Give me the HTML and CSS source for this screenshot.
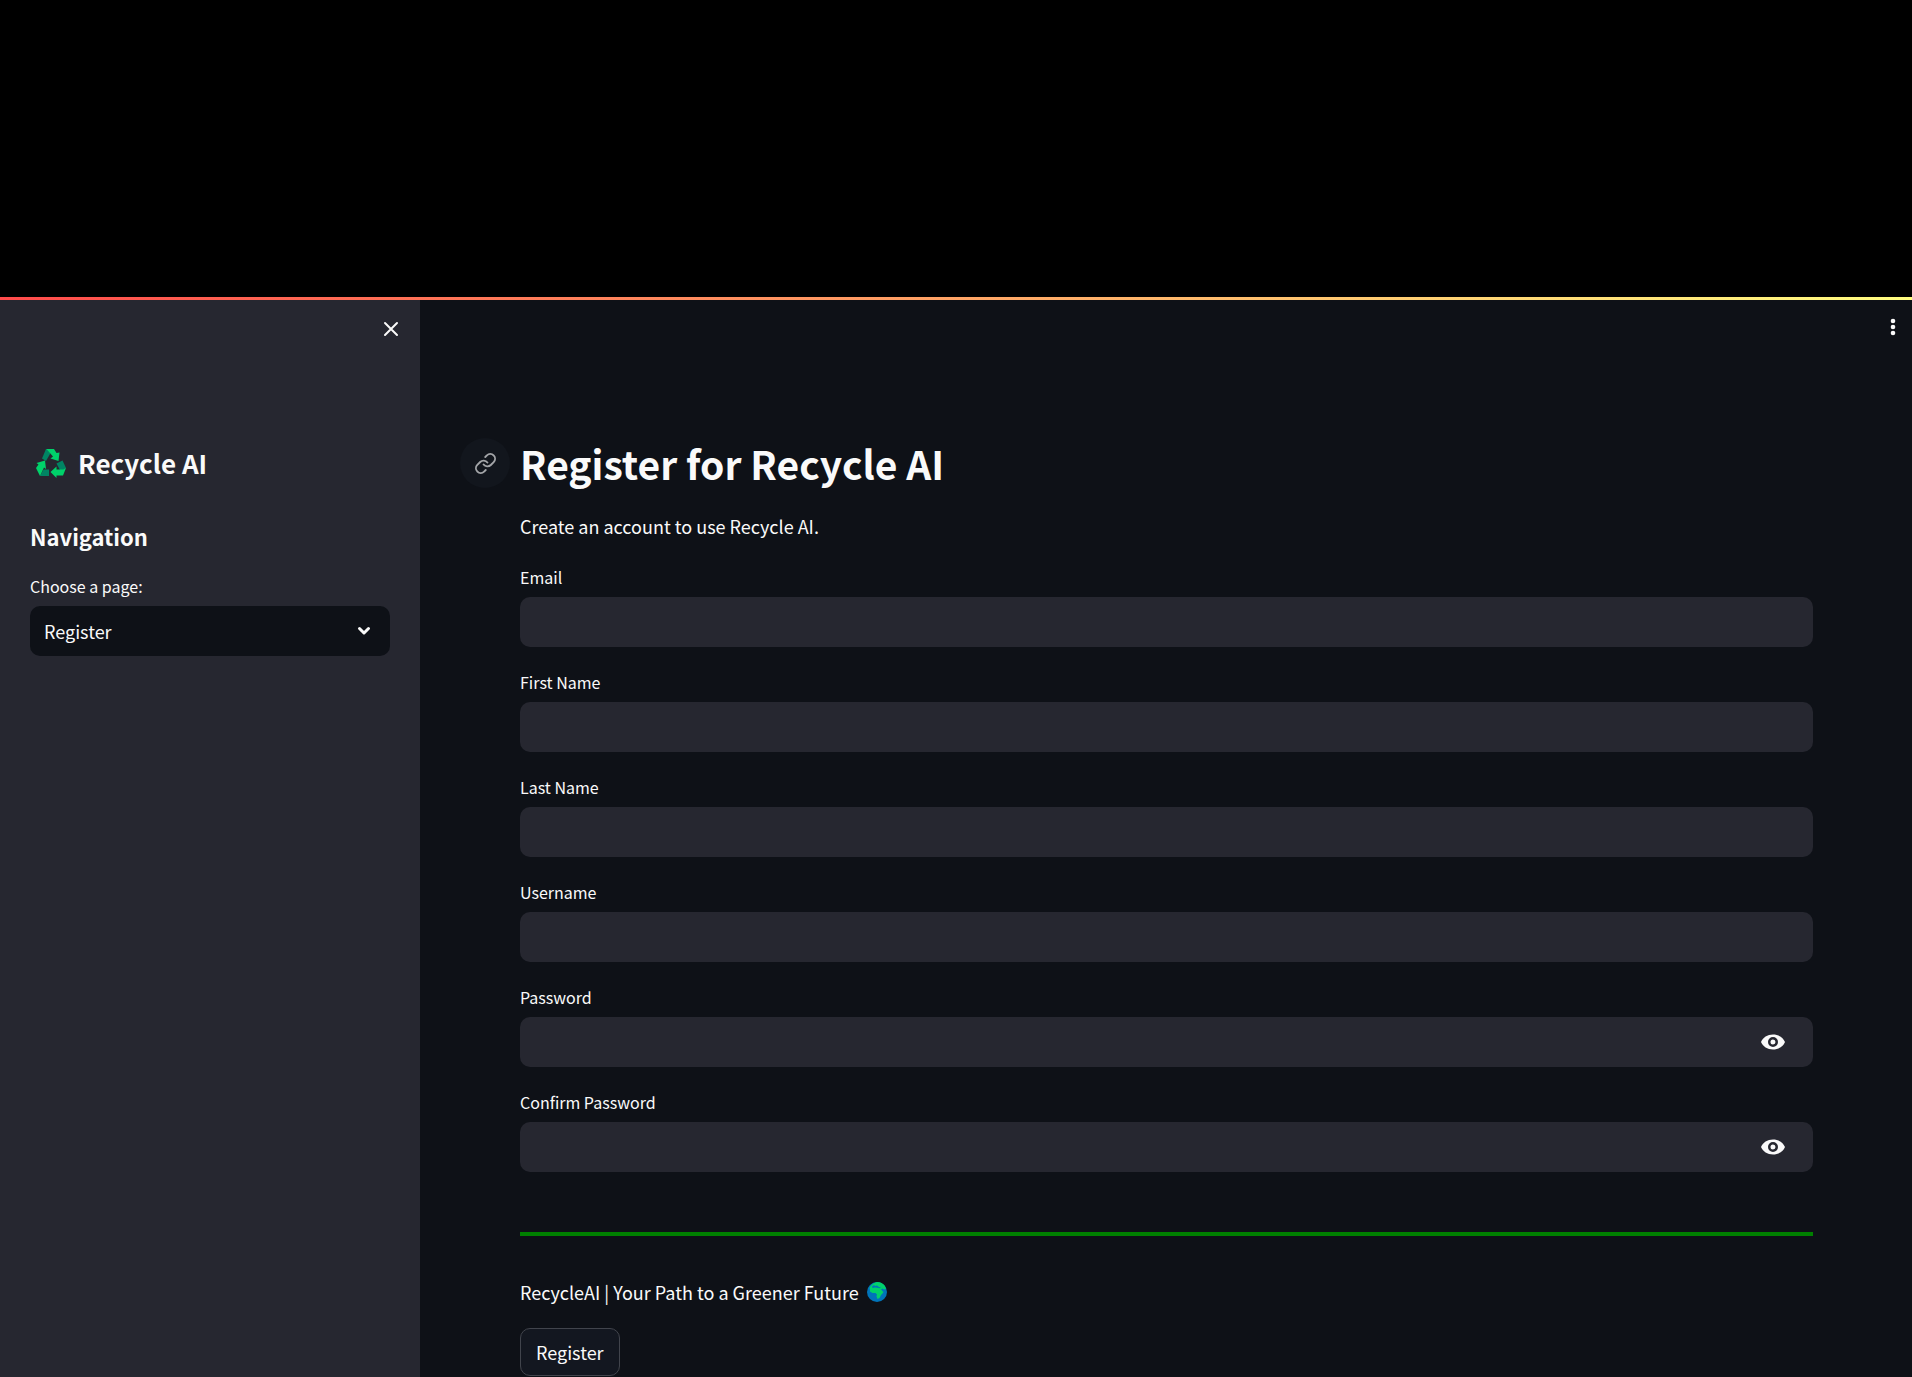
FILE: index.html
```html
<!DOCTYPE html>
<html lang="en">
<head>
<meta charset="utf-8">
<meta name="viewport" content="width=device-width, initial-scale=1">
<title>Recycle AI</title>
<link rel="stylesheet" href="styles.css">
</head>
<body>
<div class="top-space"></div>
<div class="decoration"></div>
<div class="app">
  <aside class="sidebar">
    <div class="sidebar-bar">
      <button class="icon-button" type="button" aria-label="Close sidebar">
        <svg width="16" height="16" viewBox="0 0 16 16" fill="none" stroke="#fafafa" stroke-width="2" stroke-linecap="round"><path d="M2 2l12 12M14 2L2 14"/></svg>
      </button>
    </div>
    <h2 class="brand">
      <svg class="brand-icon" width="30" height="30" viewBox="0 0 30 30" aria-hidden="true">
        <path fill="#008463" d="M10 1L15 1L14 6L10 13L6 10.500Z"/>
        <path fill="#00d26a" d="M10.500 1H18L20.500 5L23.500 4.500L22.500 13L14.500 10.500L17 8.500Z"/>
        <path fill="#008463" d="M20.500 15.500L26.500 12.500L30 20L28 22H24Z"/>
        <path fill="#00d26a" d="M30 20L27 27.500H20.500V30L14.500 24L20.500 18.500V21.500H27.500Z"/>
        <path fill="#008463" d="M13 21.500V28H4L7.500 21.500Z"/>
        <path fill="#00d26a" d="M4 28L0 20L2.500 16.500L0.500 15L9 12.500L10 21L8 19.500Z"/>
      </svg>
      <span>Recycle AI</span>
    </h2>
    <h3 class="nav-title">Navigation</h3>
    <div class="field">
      <label for="page">Choose a page:</label>
      <div class="control">
        <select id="page" class="input select"><option>Register</option></select>
        <svg class="chevron" width="14" height="10" viewBox="0 0 14 10" fill="none" stroke="#fafafa" stroke-width="3" stroke-linecap="round" stroke-linejoin="round"><path d="M2.500 2.500L7 7L11.500 2.500"/></svg>
      </div>
    </div>
  </aside>
  <main class="main">
    <div class="toolbar">
      <button class="icon-button" type="button" aria-label="Main menu">
        <svg width="6" height="18" viewBox="0 0 6 18" fill="#fafafa"><circle cx="3" cy="3" r="2.300"/><circle cx="3" cy="9" r="2.300"/><circle cx="3" cy="15" r="2.300"/></svg>
      </button>
    </div>
    <div class="content">
      <h1 class="title" id="register">
        <a class="anchor" href="#register" aria-label="Link to heading">
          <svg width="23" height="23" viewBox="0 0 24 24" fill="none" stroke="#a3a5a8" stroke-width="2" stroke-linecap="round" stroke-linejoin="round"><path d="M10 13a5 5 0 0 0 7.540.540l3-3a5 5 0 0 0-7.070-7.070l-1.720 1.710"/><path d="M14 11a5 5 0 0 0-7.540-.540l-3 3a5 5 0 0 0 7.070 7.070l1.710-1.710"/></svg>
        </a>Register for Recycle AI</h1>
      <p class="text">Create an account to use Recycle AI.</p>
      <form class="form">
        <div class="field"><label for="email">Email</label><input class="input" id="email" type="text"></div>
        <div class="field"><label for="first">First Name</label><input class="input" id="first" type="text"></div>
        <div class="field"><label for="last">Last Name</label><input class="input" id="last" type="text"></div>
        <div class="field"><label for="user">Username</label><input class="input" id="user" type="text"></div>
        <div class="field"><label for="pass">Password</label>
          <div class="control"><input class="input" id="pass" type="password">
            <button class="reveal" type="button" aria-label="Show password"><svg width="26" height="18" viewBox="0 0 26 18"><path fill="#fafafa" fill-rule="evenodd" d="M13 1.500C7.500 1.500 2.800 4.500 1 9c1.800 4.500 6.500 7.500 12 7.500S23.200 13.500 25 9C23.200 4.500 18.500 1.500 13 1.500zM13 14a5 5 0 1 1 0-10 5 5 0 0 1 0 10zM13 6.500a2.500 2.500 0 1 0 0 5 2.500 2.500 0 0 0 0-5z"/></svg></button>
          </div></div>
        <div class="field"><label for="confirm">Confirm Password</label>
          <div class="control"><input class="input" id="confirm" type="password">
            <button class="reveal" type="button" aria-label="Show password"><svg width="26" height="18" viewBox="0 0 26 18"><path fill="#fafafa" fill-rule="evenodd" d="M13 1.500C7.500 1.500 2.800 4.500 1 9c1.800 4.500 6.500 7.500 12 7.500S23.200 13.500 25 9C23.200 4.500 18.500 1.500 13 1.500zM13 14a5 5 0 1 1 0-10 5 5 0 0 1 0 10zM13 6.500a2.500 2.500 0 1 0 0 5 2.500 2.500 0 0 0 0-5z"/></svg></button>
          </div></div>
        <hr class="rule">
        <p class="text tagline">RecycleAI | Your Path to a Greener Future
          <svg width="20" height="20" viewBox="0 0 20 20" aria-hidden="true"><circle cx="10" cy="10" r="10" fill="#0074ba"/><path fill="#00d26a" d="M2.500 6C4 2.500 7 .5 10 0c3.500 0 6 1.500 8 4l1 3-2 .5-1.500-1-1.500 1L16.500 10l-1 1.500L14 13l-1.500 3-2 1-1-2.500.5-2L8.500 11l-3 0L3 9.500 3 7.500Z"/><path fill="#0074ba" d="M5 4.500l2-1.500 1 1 2-.5 2 1.500 2 .5-1 .8-3-.5L8 5.500 5.500 6z"/></svg>
        </p>
        <button class="submit" type="submit">Register</button>
      </form>
    </div>
  </main>
</div>
</body>
</html>
```
FILE: styles.css
```css
*, *::before, *::after { box-sizing: border-box; }

body {
  margin: 0;
  min-height: 100vh;
  display: flex;
  flex-direction: column;
  background: #0e1117;
  color: #fafafa;
  font-family: "Noto Sans CJK SC", "Noto Sans", sans-serif;
  font-size: 18px;
  line-height: 30px;
}

h1, h2, h3, p { margin: 0; }

button, input, select { font: inherit; color: inherit; }

.top-space { height: 297px; background: #000; }

.decoration { height: 3px; background: linear-gradient(90deg, #ff4b4b, #fffd80); }

.app { display: flex; flex: 1; }

.sidebar {
  flex: 0 0 420px;
  padding: 0 30px;
  background: #262730;
}

.sidebar-bar, .toolbar {
  display: flex;
  justify-content: flex-end;
  height: 130px;
}

.sidebar-bar { padding-top: 13px; margin-right: -17px; }

.toolbar { padding: 11px 3px 0 0; }

.icon-button {
  display: flex;
  align-items: center;
  justify-content: center;
  width: 32px;
  height: 32px;
  padding: 0;
  border: 0;
  background: none;
}

.brand {
  display: flex;
  align-items: center;
  gap: 12px;
  padding-left: 6px;
  font-size: 26px;
  font-weight: 700;
  line-height: 66px;
}

.nav-title {
  margin-top: 20px;
  font-size: 22px;
  font-weight: 700;
  line-height: 40px;
}

.sidebar .field { margin-top: 20px; }

.field { display: flex; flex-direction: column; }

.field label {
  height: 30px;
  font-size: 16px;
  line-height: 20px;
}

.control { position: relative; }

.input {
  display: block;
  width: 100%;
  height: 50px;
  padding: 0 14px;
  border: 0;
  border-radius: 10px;
  background: #262730;
}

.select { appearance: none; background: #0e1117; }

.chevron { position: absolute; right: 19px; top: 20px; pointer-events: none; }

.reveal {
  position: absolute;
  top: 0;
  right: 20px;
  display: flex;
  align-items: center;
  width: 40px;
  height: 50px;
  padding: 0 7px;
  border: 0;
  background: none;
}

.main { flex: 1; min-width: 0; }

.content { padding: 0 99px 0 100px; }

.title {
  position: relative;
  font-size: 39px;
  font-weight: 700;
  line-height: 66px;
}

.anchor {
  position: absolute;
  left: -60px;
  top: 8px;
  display: flex;
  align-items: center;
  justify-content: center;
  width: 50px;
  height: 50px;
  border-radius: 50%;
  background: #12161d;
}

.title + .text { margin-top: 15px; }

.form { display: flex; flex-direction: column; gap: 25px; margin-top: 26px; }

.rule {
  width: 100%;
  height: 4px;
  margin: 35px 0 16px;
  border: 0;
  background: #008000;
}

.tagline { display: flex; align-items: center; gap: 8px; }

.submit {
  align-self: flex-start;
  height: 48px;
  margin-top: -4px;
  padding: 0 15px;
  border: 1px solid #41444c;
  border-radius: 10px;
  background: #131720;
}
```
